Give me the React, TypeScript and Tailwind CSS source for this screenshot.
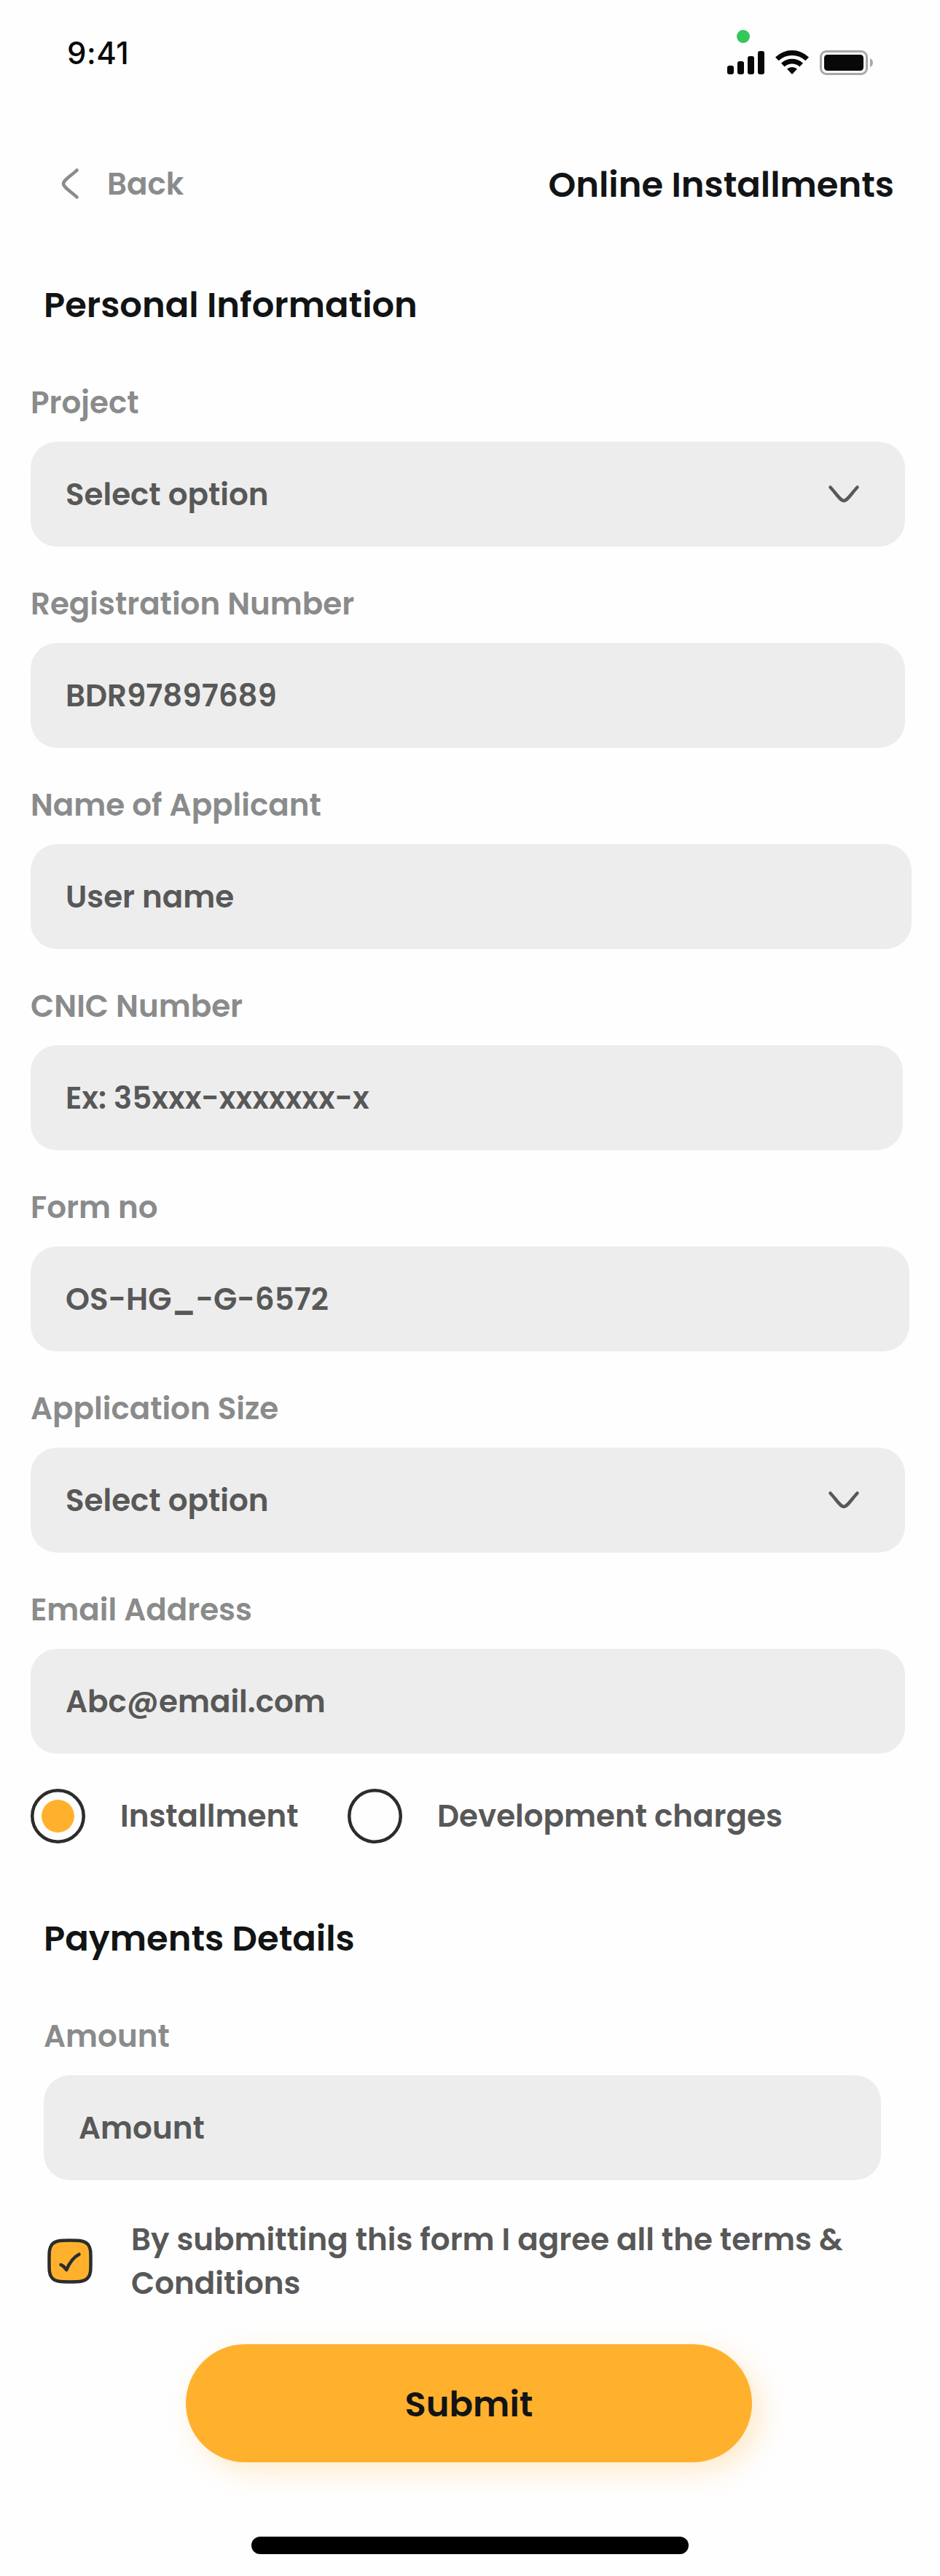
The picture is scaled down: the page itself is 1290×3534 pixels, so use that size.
import { useState, type ReactNode } from "react";

type FieldProps = {
  label: string;
  value: string;
  width: string;
  select?: boolean;
};

const fields: FieldProps[] = [
  { label: "Project", value: "Select option", width: "w-[1200px]", select: true },
  { label: "Registration Number", value: "BDR97897689", width: "w-[1200px]" },
  { label: "Name of Applicant", value: "User name", width: "w-[1209px]" },
  { label: "CNIC Number", value: "Ex: 35xxx-xxxxxxx-x", width: "w-[1197px]" },
  { label: "Form no", value: "OS-HG_-G-6572", width: "w-[1206px]" },
  { label: "Application Size", value: "Select option", width: "w-[1200px]", select: true },
  { label: "Email Address", value: "Abc@email.com", width: "w-[1200px]" },
];

function Chevron({ className }: { className: string }) {
  return (
    <svg className={className} viewBox="0 0 72 72" fill="none">
      <path
        d="M17.5 26.5 C24.5 33.5 31 45 36 45 C41 45 47.5 33.5 54.5 26.5"
        stroke="currentColor"
        strokeWidth="4.5"
        strokeLinecap="round"
        strokeLinejoin="round"
      />
    </svg>
  );
}

function StatusBar() {
  return (
    <div className="flex h-[120px] items-start justify-between pr-[92px] pl-[92px]">
      <span className="mt-[43px] font-['Inter',sans-serif] text-[42px] leading-[60px] font-medium tracking-[0.5px] text-[#080808]">
        9:41
      </span>
      <svg className="mt-[41px] h-[64px] w-[200px]" viewBox="0 0 200 64" fill="none">
        <circle cx="22" cy="9" r="9" fill="#34C759" />
        <g fill="#080808">
          <rect x="0" y="49" width="9" height="12" rx="3" />
          <rect x="14" y="43" width="9" height="18" rx="3" />
          <rect x="28" y="36" width="9" height="25" rx="3" />
          <rect x="42" y="29" width="9" height="32" rx="3" />
          <path d="M66 37.5 Q76 28 89 28 Q102 28 112 37.5 L107.5 42.3 Q99.5 34.9 89 34.9 Q78.5 34.9 70.5 42.3 Z" />
          <path d="M74 45.7 Q80.5 39.8 89 39.8 Q97.5 39.8 104 45.7 L99.4 50.4 Q94.8 46.4 89 46.4 Q83.2 46.4 78.6 50.4 Z" />
          <path d="M82 53.5 Q85 51 89 51 Q93 51 96 53.5 L89 61 Z" />
          <rect x="133" y="34" width="54" height="22" rx="4.5" />
        </g>
        <rect x="128.5" y="29.5" width="63" height="31" rx="7.5" stroke="#A8A8A8" strokeWidth="3" />
        <path d="M196 39 C201.3 41 201.3 49 196 51 Z" fill="#A8A8A8" />
      </svg>
    </div>
  );
}

function Field({ label, value, width, select }: FieldProps) {
  return (
    <div className="flex flex-col items-start gap-[23px] pt-px">
      <label className="text-[42px] leading-[60px] text-[#8A8B8B]">{label}</label>
      <div className={`flex h-36 items-center justify-between rounded-[36px] bg-[#EDEDED] pl-12 ${width}`}>
        <span className="pt-0.5 text-[42px] leading-[60px] text-[#585858]">{value}</span>
        {select && <Chevron className="mr-12 size-[72px] text-[#585858]" />}
      </div>
    </div>
  );
}

function Radio({ checked, onSelect, children }: { checked: boolean; onSelect: () => void; children: ReactNode }) {
  return (
    <button type="button" onClick={onSelect} className="flex items-center gap-12">
      <svg className="size-[75px]" viewBox="0 0 75 75" fill="none">
        <circle cx="37.5" cy="37.5" r="35.25" stroke="#2B2D2D" strokeWidth="4.5" />
        {checked && <circle cx="37.5" cy="37.5" r="22.5" fill="#FFB12E" />}
      </svg>
      <span className="pt-px text-[42px] leading-[60px] whitespace-nowrap text-[#585858]">{children}</span>
    </button>
  );
}

export default function App() {
  const [kind, setKind] = useState("installment");

  return (
    <div className="flex h-[3534px] w-[1290px] flex-col bg-[#FEFEFE] font-['Poppins',sans-serif] font-semibold">
      <StatusBar />

      <header className="mt-24 flex h-[72px] items-center justify-between pr-[63px] pl-[60px]">
        <button type="button" className="flex items-center gap-[15px] text-[42px] leading-[60px] text-[#8A8B8B]">
          <Chevron className="size-[72px] rotate-90" />
          <span className="pt-0.5">Back</span>
        </button>
        <h1 className="pt-[3px] text-[48px] leading-[72px] text-[#121415]">Online Installments</h1>
      </header>

      <h2 className="mt-[95px] ml-[60px] text-[48px] leading-[72px] text-[#121415]">Personal Information</h2>

      <section className="mt-[67px] ml-[42px] flex flex-col">
        <div className="flex flex-col gap-12">
          {fields.map((field) => (
            <Field key={field.label} {...field} />
          ))}
        </div>
        <div className="mt-12 flex">
          <div className="w-[435px]">
            <Radio checked={kind === "installment"} onSelect={() => setKind("installment")}>
              Installment
            </Radio>
          </div>
          <Radio checked={kind === "development"} onSelect={() => setKind("development")}>
            Development charges
          </Radio>
        </div>
      </section>

      <section className="mt-[95px] ml-[60px] flex flex-col">
        <h2 className="text-[48px] leading-[72px] text-[#121415]">Payments Details</h2>
        <div className="mt-[67px]">
          <Field label="Amount" value="Amount" width="w-[1149px]" />
        </div>
        <div className="mt-[51px] flex h-[120px] items-center gap-12">
          <svg className="size-[72px] shrink-0" viewBox="0 0 72 72" fill="none">
            <path
              d="M7.5 36 C7.5 24 7.3 18.5 10.8 13.8 C15 8 22 7.5 36 7.5 C50 7.5 57 8 61.2 13.8 C64.7 18.5 64.5 24 64.5 36 C64.5 48 64.7 53.5 61.2 58.2 C57 64 50 64.5 36 64.5 C22 64.5 15 64 10.8 58.2 C7.3 53.5 7.5 48 7.5 36 Z"
              fill="#FFB12E"
              stroke="#2B2D2D"
              strokeWidth="4.5"
            />
            <path
              d="M23.5 41 C27 42.5 29 44.5 31.2 48 C35 39 41 30.5 48.5 26.7"
              stroke="#2B2D2D"
              strokeWidth="4.5"
              strokeLinecap="round"
              strokeLinejoin="round"
            />
          </svg>
          <p className="w-[1010px] pt-0.5 text-[42px] leading-[60px] text-[#585858]">
            By submitting this form I agree all the terms &amp; Conditions
          </p>
        </div>
      </section>

      <button
        type="button"
        className="mt-[54px] ml-[255px] h-[162px] w-[777px] rounded-full bg-[#FFB12E] pt-1 text-[48px] leading-[72px] text-[#121415] shadow-[12px_12px_36px_rgba(255,177,46,0.25)]"
      >
        Submit
      </button>

      <div className="mt-[102px] ml-[345px] h-6 w-[600px] rounded-full bg-black" />
    </div>
  );
}
